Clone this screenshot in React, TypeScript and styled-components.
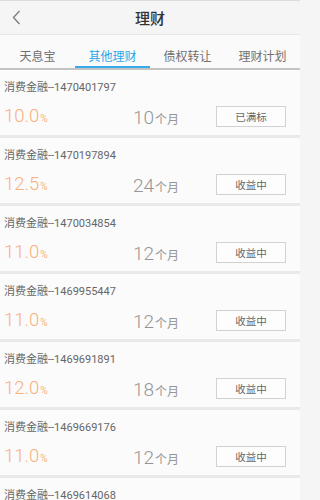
import React from "react";
import styled, { createGlobalStyle } from "styled-components";

const Global = createGlobalStyle`
  html, body { margin: 0; padding: 0; background: #f5f5f5; }
  body { font-family: Roboto, "Noto Sans CJK SC", sans-serif; }
  * { box-sizing: border-box; }
`;

const Page = styled.div`
  width: 300px;
  height: 500px;
  overflow: hidden;
  background: #e9e9e9;
  display: flex;
  flex-direction: column;
`;

const Header = styled.div`
  height: 35px;
  flex: none;
  background: #f5f5f5;
  border-top: 1px solid #dcdcdc;
  border-bottom: 1px solid #e6e6e6;
  display: grid;
  grid-template-columns: 40px 1fr 40px;
  align-items: center;
`;

const Back = styled.div`
  display: flex;
  justify-content: center;
  padding-right: 8px;
`;

const Title = styled.div`
  text-align: center;
  font-size: 15px;
  font-weight: 500;
  color: #333;
  font-family: "Noto Sans CJK SC", sans-serif;
`;

const Tabs = styled.div`
  height: 35px;
  flex: none;
  background: #fafafa;
  display: grid;
  grid-template-columns: repeat(4, 1fr);
  border-bottom: 2px solid #c4c4c4;
`;

const Tab = styled.div<{ $active?: boolean }>`
  display: flex;
  align-items: center;
  justify-content: center;
  padding-top: 9px;
  font-size: 12px;
  font-family: "Noto Sans CJK SC", sans-serif;
  color: ${(p) => (p.$active ? "#2ea6e6" : "#707070")};
  border-bottom: 2px solid ${(p) => (p.$active ? "#3aaaea" : "transparent")};
`;

const List = styled.div`
  display: flex;
  flex-direction: column;
  gap: 3px;
`;

const Card = styled.div`
  height: 65px;
  flex: none;
  background: #fbfbfb;
  padding: 8px 14px 0 4px;
  display: flex;
  flex-direction: column;
  gap: 9px;
`;

const CardTitle = styled.div`
  height: 16px;
  line-height: 16px;
  padding-top: 2px;
  font-size: 11px;
  color: #666;
  font-family: Roboto, "Noto Sans CJK SC", sans-serif;
`;

const Row = styled.div`
  height: 21px;
  display: grid;
  grid-template-columns: 129px 1fr 70px;
  align-items: center;
`;

const Rate = styled.div`
  color: #f9b079;
  font-size: 18.5px;
  font-weight: 300;
  line-height: 21px;
  padding-top: 3px;
  font-family: Roboto, sans-serif;
  white-space: nowrap;
`;

const Small = styled.span`
  font-size: 10px;
  font-weight: 400;
  margin-left: 1px;
`;

const Term = styled.div`
  color: #959595;
  font-size: 19px;
  font-weight: 300;
  line-height: 21px;
  padding-top: 3px;
  font-family: Roboto, sans-serif;
  white-space: nowrap;
`;

const Unit = styled.span`
  font-size: 12px;
  font-weight: 400;
  font-family: "Noto Sans CJK SC", sans-serif;
  margin-left: 1px;
`;

const Btn = styled.div`
  height: 21px;
  border: 1px solid #d2d2d2;
  background: #fdfdfd;
  display: flex;
  align-items: center;
  justify-content: center;
  font-size: 10.5px;
  color: #666;
  font-family: "Noto Sans CJK SC", sans-serif;
`;

const items = [
  { id: "1470401797", rate: "10.0", term: "10", status: "已满标" },
  { id: "1470197894", rate: "12.5", term: "24", status: "收益中" },
  { id: "1470034854", rate: "11.0", term: "12", status: "收益中" },
  { id: "1469955447", rate: "11.0", term: "12", status: "收益中" },
  { id: "1469691891", rate: "12.0", term: "18", status: "收益中" },
  { id: "1469669176", rate: "11.0", term: "12", status: "收益中" },
  { id: "1469614068", rate: "11.0", term: "12", status: "收益中" },
];

const tabs = ["天息宝", "其他理财", "债权转让", "理财计划"];

export default function App() {
  return (
    <Page>
      <Global />
      <Header>
        <Back>
          <svg width="9" height="15" viewBox="0 0 9 15">
            <path d="M7.5 1 L1.5 7.5 L7.5 14" fill="none" stroke="#7a7a7a" strokeWidth="1.3" />
          </svg>
        </Back>
        <Title>理财</Title>
        <div />
      </Header>
      <Tabs>
        {tabs.map((t, i) => (
          <Tab key={t} $active={i === 1}>
            {t}
          </Tab>
        ))}
      </Tabs>
      <List>
        {items.map((it) => (
          <Card key={it.id}>
            <CardTitle>消费金融--{it.id}</CardTitle>
            <Row>
              <Rate>
                {it.rate}
                <Small>%</Small>
              </Rate>
              <Term>
                {it.term}
                <Unit>个月</Unit>
              </Term>
              <Btn>{it.status}</Btn>
            </Row>
          </Card>
        ))}
      </List>
    </Page>
  );
}
